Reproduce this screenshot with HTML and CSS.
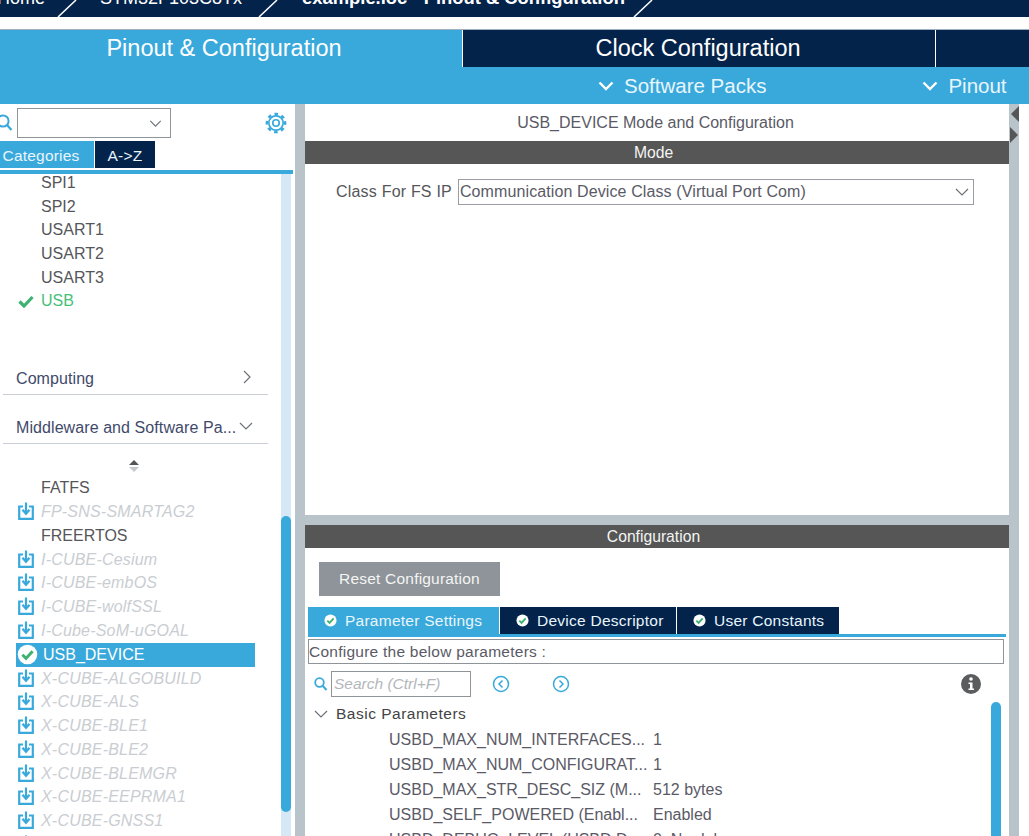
FILE: index.html
```html
<!DOCTYPE html>
<html lang="en">
<head>
<meta charset="utf-8">
<title>example.ioc - Pinout &amp; Configuration</title>
<link rel="stylesheet" href="styles.css">
</head>
<body>
<svg class="defs" width="0" height="0" aria-hidden="true">
  <symbol id="dl" viewBox="0 0 16 18">
    <path d="M5 4.500H1.200V16.800H14.800V4.500H11" fill="none" stroke="#39a9dc" stroke-width="2.200"/>
    <path d="M8 0.500V11M4.500 7.800L8 11.800L11.500 7.800" fill="none" stroke="#39a9dc" stroke-width="2.200"/>
  </symbol>
  <symbol id="ok" viewBox="0 0 14 14">
    <circle cx="7" cy="7" r="6.500" fill="#fff"/>
    <path d="M3.600 7.200L6 9.600L10.400 4.800" fill="none" stroke="#3cb371" stroke-width="2"/>
  </symbol>
</svg>

<header class="crumbs">
  <span class="crumb home">Home</span>
  <svg class="slash" viewBox="0 0 20 17"><path d="M1 17L19 0" stroke="#fff" stroke-width="1.500"/></svg>
  <span class="crumb mcu">STM32F103C8Tx</span>
  <svg class="slash" viewBox="0 0 20 17"><path d="M1 17L19 0" stroke="#fff" stroke-width="1.500"/></svg>
  <span class="crumb file">example.ioc - Pinout &amp; Configuration</span>
  <svg class="slash" viewBox="0 0 20 17"><path d="M1 17L19 0" stroke="#fff" stroke-width="1.500"/></svg>
</header>

<nav class="tabs">
  <div class="tab active">Pinout &amp; Configuration</div>
  <div class="tab clock">Clock Configuration</div>
  <div class="tab blank"></div>
</nav>

<div class="subbar">
  <div class="sub packs">
    <svg class="sub-chev" viewBox="0 0 16 10"><path d="M1.500 1.500L8 8L14.500 1.500" fill="none" stroke="#fff" stroke-width="2.400"/></svg>
    Software Packs
  </div>
  <div class="sub pinout">
    <svg class="sub-chev" viewBox="0 0 16 10"><path d="M1.500 1.500L8 8L14.500 1.500" fill="none" stroke="#fff" stroke-width="2.400"/></svg>
    Pinout
  </div>
</div>

<main class="work">
  <aside class="side">
    <div class="side-search">
      <svg class="mag" viewBox="0 0 18 18"><circle cx="6" cy="7" r="5.600" fill="none" stroke="#39a9dc" stroke-width="2"/><path d="M10 11L14.500 16" stroke="#39a9dc" stroke-width="2.200"/></svg>
      <div class="combo">
        <svg class="combo-chev" viewBox="0 0 14 8"><path d="M1 1L7 7L13 1" fill="none" stroke="#6d7278" stroke-width="1.300"/></svg>
      </div>
      <svg class="gear" viewBox="0 0 24 24"><circle cx="12" cy="12" r="7.800" fill="none" stroke="#39a9dc" stroke-width="1.800"/><circle cx="12" cy="12" r="9.800" fill="none" stroke="#39a9dc" stroke-width="3" stroke-dasharray="3.800 3.900" transform="rotate(-11 12 12)"/><circle cx="12" cy="12" r="3.500" fill="none" stroke="#39a9dc" stroke-width="1.800"/></svg>
    </div>
    <div class="side-tabs">
      <span class="side-tab on">Categories</span>
      <span class="side-tab off">A-&gt;Z</span>
    </div>
    <div class="side-body">
      <div class="side-list">
        <ul class="peri">
          <li>SPI1</li>
          <li>SPI2</li>
          <li>USART1</li>
          <li>USART2</li>
          <li>USART3</li>
          <li class="good"><svg class="check" viewBox="0 0 16 13"><path d="M1.500 6.500L6 11L14.500 2" fill="none" stroke="#3cb371" stroke-width="3.200"/></svg>USB</li>
        </ul>
        <div class="group first"><span>Computing</span><svg class="g-chev" viewBox="0 0 8 14"><path d="M1 1L7 7L1 13" fill="none" stroke="#6d7278" stroke-width="1.200"/></svg></div>
        <div class="group"><span>Middleware and Software Pa...</span><svg class="g-chev down" viewBox="0 0 14 8"><path d="M1 1L7 7L13 1" fill="none" stroke="#6d7278" stroke-width="1.200"/></svg></div>
        <svg class="sort" viewBox="0 0 10 12"><path d="M5 0L10 5H0z" fill="#555"/><path d="M5 12L0 7H10z" fill="#c5c9cc"/></svg>
        <ul class="mw">
          <li>FATFS</li>
          <li class="pack"><svg class="dl"><use href="#dl"/></svg>FP-SNS-SMARTAG2</li>
          <li>FREERTOS</li>
          <li class="pack"><svg class="dl"><use href="#dl"/></svg>I-CUBE-Cesium</li>
          <li class="pack"><svg class="dl"><use href="#dl"/></svg>I-CUBE-embOS</li>
          <li class="pack"><svg class="dl"><use href="#dl"/></svg>I-CUBE-wolfSSL</li>
          <li class="pack"><svg class="dl"><use href="#dl"/></svg>I-Cube-SoM-uGOAL</li>
          <li class="sel"><svg class="sel-ok"><use href="#ok"/></svg>USB_DEVICE</li>
          <li class="pack"><svg class="dl"><use href="#dl"/></svg>X-CUBE-ALGOBUILD</li>
          <li class="pack"><svg class="dl"><use href="#dl"/></svg>X-CUBE-ALS</li>
          <li class="pack"><svg class="dl"><use href="#dl"/></svg>X-CUBE-BLE1</li>
          <li class="pack"><svg class="dl"><use href="#dl"/></svg>X-CUBE-BLE2</li>
          <li class="pack"><svg class="dl"><use href="#dl"/></svg>X-CUBE-BLEMGR</li>
          <li class="pack"><svg class="dl"><use href="#dl"/></svg>X-CUBE-EEPRMA1</li>
          <li class="pack"><svg class="dl"><use href="#dl"/></svg>X-CUBE-GNSS1</li>
          <li class="pack"><svg class="dl"><use href="#dl"/></svg>X-CUBE-IOTA1</li>
        </ul>
      </div>
      <div class="track"><div class="thumb"></div></div>
    </div>
  </aside>

  <section class="main">
    <div class="panel mode-panel">
      <div class="title">USB_DEVICE Mode and Configuration</div>
      <div class="bar">Mode</div>
      <div class="class-row">
        <span class="class-label">Class For FS IP</span>
        <div class="class-select">
          <span>Communication Device Class (Virtual Port Com)</span>
          <svg class="select-chev" viewBox="0 0 14 8"><path d="M1 1L7 7L13 1" fill="none" stroke="#6d7278" stroke-width="1.200"/></svg>
        </div>
      </div>
    </div>
    <div class="panel config-panel">
      <div class="bar">Configuration</div>
      <button class="reset" type="button">Reset Configuration</button>
      <div class="cfg-tabs">
        <div class="cfg-tab on"><svg class="tab-ok"><use href="#ok"/></svg>Parameter Settings</div>
        <div class="cfg-tab"><svg class="tab-ok"><use href="#ok"/></svg>Device Descriptor</div>
        <div class="cfg-tab"><svg class="tab-ok"><use href="#ok"/></svg>User Constants</div>
      </div>
      <div class="hint">Configure the below parameters :</div>
      <div class="tools">
        <svg class="mag2" viewBox="0 0 14 14"><circle cx="5.500" cy="5.500" r="4.300" fill="none" stroke="#39a9dc" stroke-width="1.800"/><path d="M8.500 8.500L12.500 13" stroke="#39a9dc" stroke-width="2"/></svg>
        <div class="search">Search (Ctrl+F)</div>
        <svg class="nav prev" viewBox="0 0 18 18"><circle cx="9" cy="9" r="7.500" fill="none" stroke="#39a9dc" stroke-width="1.500"/><path d="M10.500 5.500L7 9L10.500 12.500" fill="none" stroke="#39a9dc" stroke-width="1.500"/></svg>
        <svg class="nav next" viewBox="0 0 18 18"><circle cx="9" cy="9" r="7.500" fill="none" stroke="#39a9dc" stroke-width="1.500"/><path d="M7.500 5.500L11 9L7.500 12.500" fill="none" stroke="#39a9dc" stroke-width="1.500"/></svg>
        <svg class="info" viewBox="0 0 20 20"><circle cx="10" cy="10" r="10" fill="#5a5c5e"/><circle cx="10" cy="5" r="1.800" fill="#fff"/><path d="M7.500 8.500H11.500V14.500H13V16H7.500V14.500H9V10H7.500z" fill="#fff"/></svg>
      </div>
      <div class="params">
        <div class="param-list">
          <div class="param-head"><svg class="head-chev" viewBox="0 0 14 8"><path d="M1 1L7 7L13 1" fill="none" stroke="#6d7278" stroke-width="1.200"/></svg>Basic Parameters</div>
          <div class="param"><span class="p-name">USBD_MAX_NUM_INTERFACES...</span><span class="p-val">1</span></div>
          <div class="param"><span class="p-name">USBD_MAX_NUM_CONFIGURAT...</span><span class="p-val">1</span></div>
          <div class="param"><span class="p-name">USBD_MAX_STR_DESC_SIZ (M...</span><span class="p-val">512 bytes</span></div>
          <div class="param"><span class="p-name">USBD_SELF_POWERED (Enabl...</span><span class="p-val">Enabled</span></div>
          <div class="param"><span class="p-name">USBD_DEBUG_LEVEL (USBD D...</span><span class="p-val">0: No debug</span></div>
        </div>
        <div class="p-track"><div class="p-thumb"></div></div>
      </div>
    </div>
  </section>

  <div class="edge">
    <svg class="arrow back" viewBox="0 0 8 16"><path d="M8 0V16L0 8z" fill="#555655"/></svg>
    <svg class="arrow" viewBox="0 0 8 16"><path d="M0 0V16L8 8z" fill="#555655"/></svg>
  </div>
</main>
</body>
</html>
```

FILE: styles.css
```css
* { box-sizing: border-box; }
html, body { margin: 0; padding: 0; }
body {
  width: 1029px;
  height: 836px;
  overflow: hidden;
  background: #fff;
  font-family: "Liberation Sans", Arial, sans-serif;
  color: #55565a;
}
ul { list-style: none; margin: 0; padding: 0; }
.defs { position: absolute; }

.crumbs {
  height: 17px;
  background: #03234b;
  color: #fff;
  display: flex;
  align-items: flex-end;
  overflow: hidden;
  font-size: 18px;
  line-height: 20px;
}
.crumb { white-space: nowrap; position: relative; top: -9px; align-self: flex-end; }
.home { margin-left: -3px; width: 60px; flex: none; }
.slash { width: 20px; height: 17px; flex: none; }
.mcu { margin-left: 23px; width: 158px; flex: none; }
.file { margin-left: 24px; width: 331px; flex: none; font-weight: bold; font-size: 18.400px; }

.tabs {
  margin-top: 12px;
  height: 38px;
  display: flex;
  background: #03234b;
  border-top: 1px solid #9fb0c0;
}
.tab {
  display: flex;
  align-items: center;
  justify-content: center;
  color: #fff;
  font-size: 23.500px;
  padding-bottom: 1px;
}
.tab.active { width: 462px; background: #39a9dc; padding-right: 14px; }
.tab.clock { width: 474px; border-left: 1px solid #fff; border-right: 1px solid #fff; padding-right: 2px; }
.tab.blank { flex: 1; }

.subbar {
  height: 37px;
  background: #39a9dc;
  color: #e9f5fb;
  font-size: 20.500px;
  display: flex;
  align-items: center;
  position: relative;
}
.sub { display: flex; align-items: center; white-space: nowrap; }
.packs { margin-left: 598px; gap: 10px; }
.pinout { margin-left: 156px; gap: 10px; }
.sub-chev { width: 16px; height: 10px; flex: none; }

.work { display: flex; height: 732px; overflow: hidden; }

.side {
  width: 295px;
  flex: none;
  display: flex;
  flex-direction: column;
  background: #fff;
}
.side-search { height: 37px; display: flex; align-items: center; position: relative; }
.mag { width: 18px; height: 18px; margin-left: -3px; flex: none; }
.combo {
  width: 154px;
  height: 30px;
  margin-left: 2px;
  margin-top: 1px;
  border: 1px solid #8f9499;
  display: flex;
  align-items: center;
  justify-content: flex-end;
  padding-right: 8px;
}
.combo-chev { width: 13px; height: 7px; }
.gear { width: 22px; height: 22px; margin-left: 94px; flex: none; }
.side-tabs {
  height: 33px;
  display: flex;
  align-items: flex-start;
  border-bottom: 4px solid #39a9dc;
  margin-right: 2px;
}
.side-tab {
  height: 27px;
  display: flex;
  align-items: center;
  justify-content: center;
  color: #e9f5fb;
  font-size: 15.500px;
  letter-spacing: .2px;
  padding-top: 3px;
}
.side-tab.on { width: 94px; background: #39a9dc; padding-right: 12px; }
.side-tab.off { width: 61px; background: #03234b; border-left: 1px solid #fff; }

.side-body { flex: 1; display: flex; min-height: 0; }
.side-list { width: 281px; flex: none; overflow: hidden; position: relative; }
.peri li {
  height: 23.700px;
  line-height: 23.700px;
  padding-left: 41px;
  font-size: 16px;
  color: #55565a;
  position: relative;
}
.peri li:first-child { margin-top: -3px; }
.peri .good { color: #46c07a; }
.check { position: absolute; left: 18px; top: 6px; width: 16px; height: 13px; }

.group {
  width: 265px;
  height: 49px;
  margin-left: 3px;
  border-bottom: 1px solid #c8ced3;
  padding: 0 13px;
  display: flex;
  align-items: flex-end;
  justify-content: space-between;
  color: #3f4a6b;
  font-size: 16px;
  letter-spacing: .08px;
  line-height: 30px;
  white-space: nowrap;
}
.group.first { margin-top: 49px; height: 33px; }
.g-chev { width: 8px; height: 14px; margin-bottom: 10px; margin-right: 4px; flex: none; }
.g-chev.down { width: 14px; height: 8px; margin-bottom: 13px; margin-right: 2px; margin-left: -4px; }
.sort { display: block; width: 10px; height: 12px; margin: 16px 0 0 129px; }
.mw { margin-top: 4px; }
.mw li {
  height: 23.800px;
  line-height: 23.800px;
  padding-left: 41px;
  font-size: 16px;
  color: #55565a;
  white-space: nowrap;
  position: relative;
}
.mw .pack { color: #c9cdd2; font-style: italic; letter-spacing: .2px; }
.dl { position: absolute; left: 18px; top: 2px; width: 16px; height: 18px; }
.mw .sel {
  width: 239px;
  margin-left: 16px;
  padding-left: 27px;
  background: #39a9dc;
  color: #fff;
}
.sel-ok { position: absolute; left: 1px; top: 1.500px; width: 21px; height: 21px; }

.track { width: 10px; flex: none; background: #d6e7f5; }
.thumb { height: 296px; margin-top: 342px; background: #39a9dc; border-radius: 5px; }

.main {
  width: 714px;
  flex: none;
  display: flex;
  flex-direction: column;
  gap: 10px;
  background: #b9c4ca;
  padding-left: 10px;
}
.panel { background: #fff; }
.mode-panel { height: 411px; }
.config-panel { flex: 1; min-height: 0; overflow: hidden; display: flex; flex-direction: column; }
.title { height: 37px; display: flex; align-items: center; justify-content: center; font-size: 16px; color: #5a5a66; padding-right: 3px; }
.bar {
  height: 23px;
  flex: none;
  background: #555655;
  color: #f4f4f4;
  font-size: 15.700px;
  line-height: 23px;
  text-align: center;
  padding-right: 7px;
}
.class-row { display: flex; align-items: center; margin-top: 15px; padding-left: 31px; gap: 6px; }
.class-label { font-size: 16px; letter-spacing: .2px; white-space: nowrap; }
.class-select {
  width: 516px;
  height: 26px;
  border: 1px solid #9a9ea3;
  display: flex;
  align-items: center;
  justify-content: space-between;
  padding: 0 3px 0 1px;
  font-size: 16px;
  letter-spacing: .11px;
  color: #5a5a66;
}
.select-chev { width: 14px; height: 8px; margin-right: 1px; }

.reset {
  flex: none;
  align-self: flex-start;
  width: 181px;
  height: 34px;
  margin: 14px 0 0 14px;
  border: 0;
  padding: 0;
  background: #8e9499;
  color: #f4f4f4;
  font-family: inherit;
  font-size: 15.500px;
  letter-spacing: .2px;
}
.cfg-tabs {
  flex: none;
  display: flex;
  margin: 11px 3px 0 3px;
  border-bottom: 3px solid #39a9dc;
}
.cfg-tab {
  height: 27px;
  display: flex;
  align-items: center;
  padding: 0 12px 0 16px;
  gap: 8px;
  background: #03234b;
  color: #e9f5fb;
  font-size: 15.500px;
  letter-spacing: .25px;
  white-space: nowrap;
  border-left: 1px solid #fff;
}
.cfg-tab.on { background: #39a9dc; border-left: 0; width: 191px; }
.cfg-tab:nth-child(2) { width: 177px; }
.cfg-tab:nth-child(3) { width: 163px; }
.tab-ok { width: 13px; height: 13px; flex: none; }
.hint {
  flex: none;
  height: 25px;
  margin: 2px 5px 0 3px;
  border: 1px solid #8f9499;
  line-height: 23px;
  font-size: 15.500px;
  letter-spacing: .25px;
  color: #5a5a66;
}
.tools { flex: none; height: 26px; margin-top: 7px; display: flex; align-items: center; padding-left: 9px; }
.mag2 { width: 14px; height: 14px; flex: none; }
.search {
  width: 140px;
  height: 26px;
  margin-left: 3px;
  border: 1px solid #8f9499;
  padding-left: 2px;
  line-height: 24px;
  font-size: 15.500px;
  font-style: italic;
  color: #b3b7bb;
}
.nav { width: 18px; height: 18px; flex: none; }
.prev { margin-left: 21px; }
.next { margin-left: 42px; }
.info { width: 20px; height: 20px; margin-left: 391px; flex: none; }
.params { flex: 1; min-height: 0; display: flex; padding-top: 5px; }
.param-list { width: 686px; flex: none; }
.param-head { height: 25px; display: flex; align-items: center; padding: 0 0 2px 9px; gap: 8px; font-size: 15.500px; color: #444; letter-spacing: .5px; }
.head-chev { width: 14px; height: 8px; flex: none; }
.param { height: 25px; display: flex; align-items: center; padding-left: 84px; font-size: 16px; color: #5a5a66; white-space: nowrap; }
.p-name { width: 264px; flex: none; overflow: hidden; }
.p-track { width: 10px; flex: none; }
.p-thumb { height: 300px; background: #39a9dc; border-radius: 5px; }

.edge { width: 20px; flex: none; background: linear-gradient(to right, #b9c4ca 10px, #fff 10px); display: flex; flex-direction: column; gap: 5px; padding: 2px 0 0 1px; }
.arrow { width: 8px; height: 16px; display: block; }
.arrow.back { margin-left: 1px; }
```
